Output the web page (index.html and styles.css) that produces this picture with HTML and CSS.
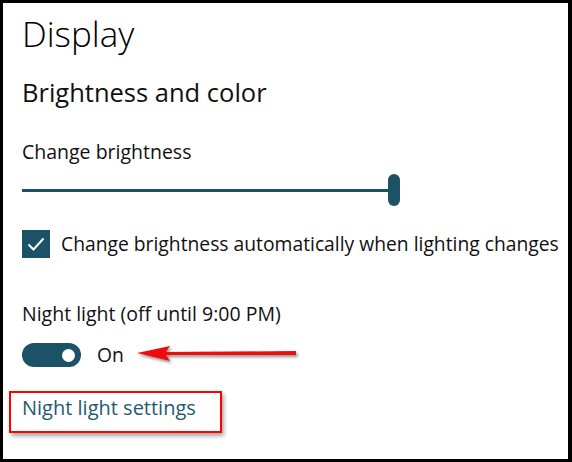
FILE: index.html
```html
<!DOCTYPE html>
<html>
<head>
<meta charset="utf-8">
<link rel="stylesheet" href="styles.css">
</head>
<body>
<div class="frame">
  <h1 class="title">Display</h1>
  <h2 class="subtitle">Brightness and color</h2>
  <div class="label">Change brightness</div>
  <div class="slider">
    <div class="track"></div>
    <div class="thumb"></div>
  </div>
  <div class="check-row">
    <span class="checkbox">
      <svg width="28" height="28" viewBox="0 0 28 28"><path d="M6.5 14.5 L11.5 19.5 L21.5 8.5" fill="none" stroke="#fff" stroke-width="2"/></svg>
    </span>
    <span class="text">Change brightness automatically when lighting changes</span>
  </div>
  <div class="label night">Night light (off until 9:00 PM)</div>
  <div class="toggle-row">
    <span class="toggle"><span class="knob"></span></span>
    <span class="text">On</span>
    <svg class="arrow" width="166" height="22" viewBox="0 0 166 22">
      <defs>
        <filter id="sh" x="-10%" y="-50%" width="120%" height="200%">
          <feDropShadow dx="1.5" dy="2" stdDeviation="1.5" flood-color="#000" flood-opacity="0.45"/>
        </filter>
      </defs>
      <g filter="url(#sh)" fill="#ee1111">
        <path d="M1 8 L34 1 L30 7 L160 6 L160 10 L30 10 L34 16 Z"/>
      </g>
    </svg>
  </div>
  <div class="link-box"><a class="link" href="#">Night light settings</a></div>
</div>
</body>
</html>
```
FILE: styles.css
```css
html, body {
  margin: 0;
  padding: 0;
  background: #fff;
}
.frame {
  box-sizing: border-box;
  width: 572px;
  height: 462px;
  border-style: solid;
  border-color: #000;
  border-width: 3px 4px 3px 3px;
  padding: 11px 0 0 19px;
  font-family: "Open Sans", "Noto Sans", sans-serif;
  color: #111;
  overflow: hidden;
}
.title {
  margin: 0;
  font-size: 35px;
  line-height: 40px;
  font-weight: 300;
  color: #000;
}
.subtitle {
  margin: 22px 0 0;
  font-size: 25.5px;
  line-height: 32px;
  font-weight: 400;
}
.label {
  margin-top: 32px;
  font-size: 19.5px;
  line-height: 24px;
}
.slider {
  margin-top: 10px;
  width: 378px;
  height: 32px;
  display: flex;
  align-items: center;
}
.track {
  flex: 1;
  height: 3px;
  background: #1c5266;
}
.thumb {
  width: 12px;
  height: 32px;
  border-radius: 6px;
  background: #1c5266;
}
.check-row {
  margin-top: 24px;
  display: flex;
  align-items: center;
  gap: 11px;
}
.checkbox {
  width: 28px;
  height: 28px;
  background: #1c5266;
  display: block;
}
.checkbox svg { display: block; }
.text {
  font-size: 19.3px;
  line-height: 24px;
}
.label.night {
  margin-top: 44px;
}
.toggle-row {
  margin-top: 17px;
  display: flex;
  align-items: center;
  gap: 16px;
}
.toggle {
  width: 59px;
  height: 24px;
  border-radius: 12px;
  background: #1c5266;
  display: flex;
  align-items: center;
  justify-content: flex-end;
  padding-right: 6px;
  box-sizing: border-box;
}
.knob {
  width: 13px;
  height: 13px;
  border-radius: 50%;
  background: #fff;
}
.arrow {
  margin-left: -4px;
  margin-top: 2px;
  display: block;
}
.link-box {
  margin: 24px 0 0 -13px;
  width: 213px;
  height: 42px;
  box-sizing: border-box;
  border: 2px solid #f00;
  padding: 3px 0 0 11px;
  box-shadow: 2px 3px 4px rgba(0,0,0,0.35);
}
.link {
  font-size: 20px;
  line-height: 24px;
  color: #1f5a70;
  text-decoration: none;
}
```
